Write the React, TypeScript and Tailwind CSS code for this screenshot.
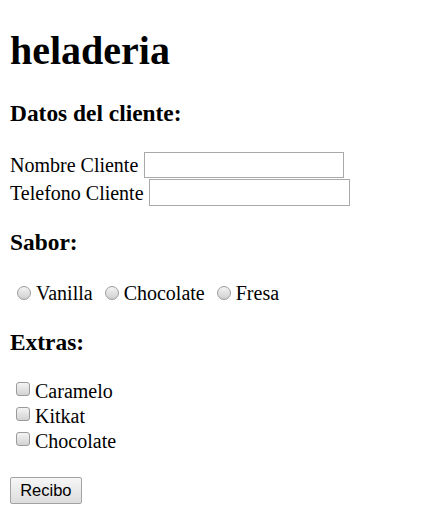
const radioCls =
  "ml-[7px] h-[14px] w-[14px] shrink-0 rounded-full border border-[#9a9a9a] bg-gradient-to-b from-[#f4f4f4] to-[#cfcfcf]";
const checkCls =
  "ml-[5.5px] mb-[3px] h-[14px] w-[14px] shrink-0 rounded-[3px] border border-[#9a9a9a] bg-gradient-to-b from-[#f4f4f4] to-[#d3d3d3]";

export default function App() {
  return (
    <div className="flex min-h-screen flex-col items-start bg-white px-[10px] font-['Liberation_Serif','Times_New_Roman',serif] text-[20px] text-black">
      <h1 className="mt-[28.5px] text-[40px] font-bold leading-[44px]">heladeria</h1>

      <h3 className="mt-[27.6px] text-[23.4px] font-bold leading-[26px]">Datos del cliente:</h3>

      <div className="mt-[25.3px] flex h-[27.5px] items-center">
        <span>Nombre Cliente</span>
        <input type="text" className="ml-[5.5px] h-[26.5px] w-[200.5px] border border-[#a9a9a9] bg-white outline-none" />
      </div>
      <div className="flex h-[27.5px] items-center">
        <span>Telefono Cliente</span>
        <input type="text" className="ml-[5.5px] h-[26.5px] w-[200.5px] border border-[#a9a9a9] bg-white outline-none" />
      </div>

      <h3 className="mt-[23px] text-[23.4px] font-bold leading-[26px]">Sabor:</h3>

      <div className="mt-[24.6px] flex h-[27px] items-center">
        <span className={radioCls} />
        <span className="ml-[5px]">Vanilla</span>
        <span className={`${radioCls} !ml-[12px]`} />
        <span className="ml-[5px]">Chocolate</span>
        <span className={`${radioCls} !ml-[12px]`} />
        <span className="ml-[5px]">Fresa</span>
      </div>

      <h3 className="mt-[21.8px] text-[23.4px] font-bold leading-[26px]">Extras:</h3>

      <div className="mt-[23.6px] flex flex-col">
        {["Caramelo", "Kitkat", "Chocolate"].map((x) => (
          <div key={x} className="flex h-[25px] items-center">
            <span className={checkCls} />
            <span className="ml-[5.5px]">{x}</span>
          </div>
        ))}
      </div>

      <button
        type="button"
        className="mt-[23.6px] h-[26.7px] w-[71.7px] rounded-[2px] border border-[#a3a3a3] bg-gradient-to-b from-[#f6f6f6] to-[#dddddd] font-['Liberation_Sans',Arial,sans-serif] text-[16.5px] leading-none text-black"
      >
        Recibo
      </button>
    </div>
  );
}
